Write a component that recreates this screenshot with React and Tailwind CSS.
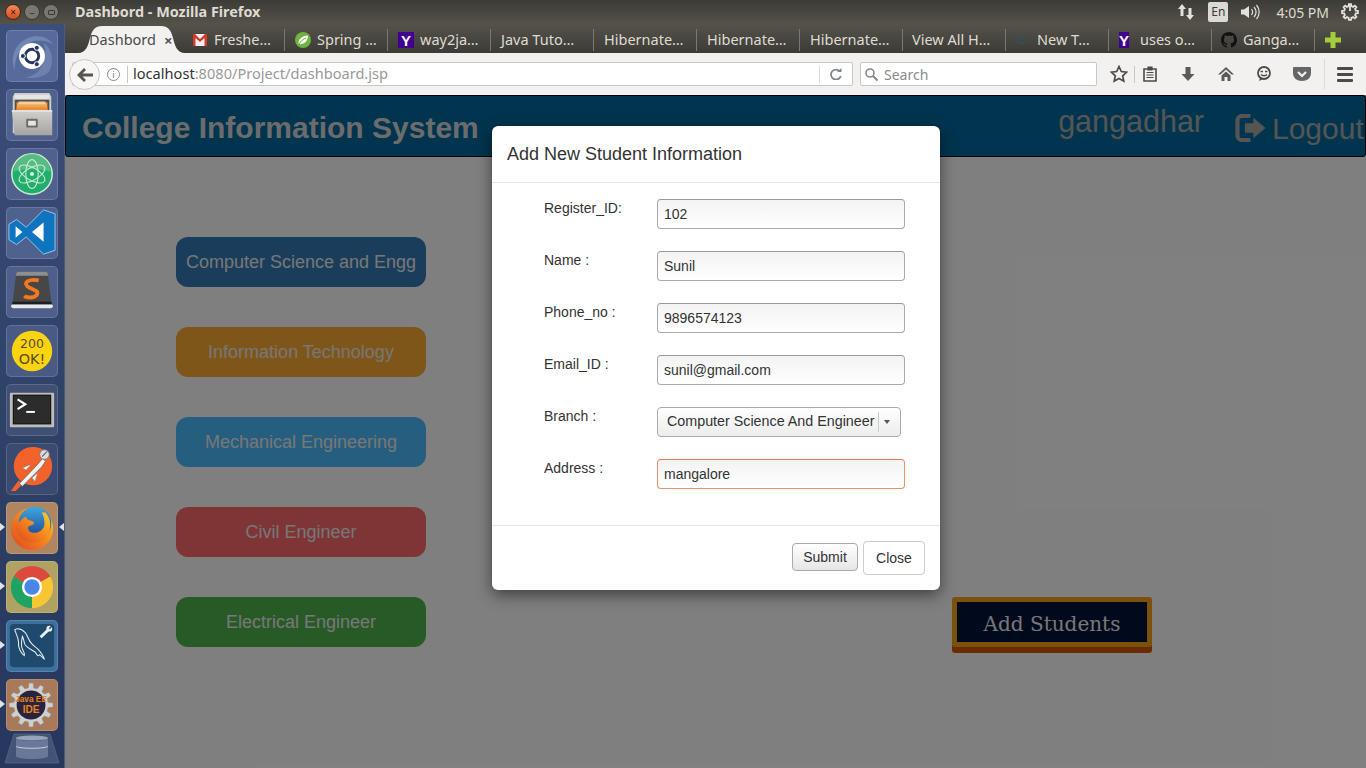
import React from "react";

const gearPoints = (cx, cy, ro, ri, n) => {
  const pts = [];
  for (let i = 0; i < n; i++) {
    const a = (i / n) * Math.PI * 2;
    const s = Math.PI / n;
    [[ri, a - s * 0.62], [ro, a - s * 0.36], [ro, a + s * 0.36], [ri, a + s * 0.62]].forEach(([r, t]) =>
      pts.push(`${(cx + r * Math.cos(t)).toFixed(1)},${(cy + r * Math.sin(t)).toFixed(1)}`)
    );
  }
  return pts.join(" ");
};

const Ico = ({ children, size = 52, box = 52, className = "" }) => (
  <svg width={size} height={size} viewBox={`0 0 ${box} ${box}`} className={className}>{children}</svg>
);

const UbuntuIcon = () => (
  <Ico>
    <path d="M8 40C2 26 10 10 26 6c10-2 18 2 22 8-8-5-20-6-28 0C12 20 8 30 8 40z" fill="#8b9cc6" opacity=".55" />
    <path d="M44 42c6-12 2-24-6-30 4 10 2 24-8 32-4 3-8 4-12 4 10 2 20 0 26-6z" fill="#8b9cc6" opacity=".45" />
    <circle cx="26" cy="26" r="13.500" fill="#fff" />
    <circle cx="26" cy="26" r="7" fill="none" stroke="#27365f" strokeWidth="3" />
    <circle cx="31" cy="17.500" r="2.600" fill="#27365f" stroke="#fff" />
    <circle cx="31" cy="34.500" r="2.600" fill="#27365f" stroke="#fff" />
    <circle cx="16.500" cy="26" r="2.600" fill="#27365f" stroke="#fff" />
  </Ico>
);
const FilesIcon = () => (
  <Ico>
    <defs>
      <linearGradient id="fg" x1="0" y1="0" x2="0" y2="1">
        <stop offset="0" stopColor="#d2d0cc" />
        <stop offset="1" stopColor="#a6a4a0" />
      </linearGradient>
    </defs>
    <path d="M8 3h36l2 4v38H6V7z" fill="#cfcecb" />
    <rect x="8" y="5" width="36" height="5" fill="#e6e5e3" />
    <rect x="8" y="10" width="36" height="11" fill="#55534f" />
    <rect x="10" y="13" width="32" height="8" fill="#f0a454" />
    <rect x="12" y="12" width="28" height="3" fill="#f7cf9b" />
    <rect x="10" y="18" width="32" height="3" fill="#e98f3a" />
    <path d="M5 21h42v26H8z" fill="url(#fg)" />
    <path d="M5 21h42v1.500H5z" fill="#e8e7e4" />
    <rect x="20" y="30" width="12" height="9" rx="1" fill="#6d6b68" />
    <rect x="22" y="32" width="8" height="5" fill="#e7e6e4" />
  </Ico>
);
const AtomIcon = () => (
  <Ico>
    <circle cx="26" cy="26" r="21" fill="#1fae6d" stroke="#cfe9d5" strokeWidth="1.600" />
    <path d="M7 24A19 19 0 0 1 45 24C40 20 12 20 7 24z" fill="#6cc28d" opacity=".7" />
    <g fill="none" stroke="#c3e8cf" strokeWidth="1.200">
      <ellipse cx="26" cy="26" rx="15" ry="6.500" transform="rotate(30 26 26)" />
      <ellipse cx="26" cy="26" rx="15" ry="6.500" transform="rotate(-30 26 26)" />
      <ellipse cx="26" cy="26" rx="15" ry="6.500" transform="rotate(90 26 26)" />
    </g>
    <circle cx="26" cy="26" r="2.200" fill="#d4efdc" />
  </Ico>
);
const VSCodeIcon = () => (
  <Ico>
    <path d="M38 2l12 4v38l-12 4-18-18-10 8-8-5V17l8-5 10 8z" fill="#0e74c0" stroke="#9cc6e8" strokeWidth="1" />
    <path d="M38 15v20L26 25z" fill="#fff" />
    <path d="M9 19l7 6-7 6z" fill="#fff" />
  </Ico>
);
const SublimeIcon = () => (
  <Ico>
    <path d="M12 5h28q2 0 2.500 2L46 36H6L9.500 7q.5-2 2.500-2z" fill="#474747" />
    <path d="M12 5h28q2 0 2.500 2l.3 2H9.200l.3-2q.5-2 2.500-2z" fill="#8e8e8e" />
    <path d="M6 36h40l1 3H5z" fill="#1e1e1e" />
    <path d="M5 39h42l1 2-2 2H6l-2-2z" fill="#e8e8e8" />
    <path d="M33 14C23 12 17 16 21 20 26 24 34 24 31 29 28 33 20 32 18 30" fill="none" stroke="#f5781f" strokeWidth="4" />
  </Ico>
);
const OkIcon = () => (
  <Ico>
    <circle cx="26" cy="26" r="21" fill="#fbd411" />
    <text x="26" y="23" textAnchor="middle" fontSize="13" fontFamily="'DejaVu Sans',sans-serif" fill="#5a4c10">200</text>
    <text x="26" y="39" textAnchor="middle" fontSize="15" fontFamily="'DejaVu Sans',sans-serif" fill="#5a4c10">OK!</text>
  </Ico>
);
const TermIcon = () => (
  <Ico>
    <rect x="3" y="8" width="46" height="36" rx="1" fill="#bdbdbb" />
    <rect x="6" y="10" width="40" height="31" fill="#111" />
    <rect x="7" y="11" width="38" height="29" fill="#2c2c2c" />
    <path d="M11 15l8 5-8 5" fill="none" stroke="#fff" strokeWidth="2.200" />
    <rect x="20" y="27" width="9" height="2" fill="#fff" />
  </Ico>
);
const PostmanIcon = () => (
  <Ico>
    <circle cx="27" cy="23" r="20" fill="#f4622b" />
    <path d="M4 49L12 38l5 3-8 8z" fill="#f4622b" />
    <path d="M13 41l19-20 5-6 3 3-4 6-20 20z" fill="#f2f2f2" stroke="#666" strokeWidth=".8" />
    <circle cx="39" cy="11" r="5" fill="#ddd" stroke="#777" />
    <path d="M36.500 13l5-5" stroke="#666" strokeWidth="1.200" />
    <path d="M25 21l-9 4 4 2zM32 30l-3 9-3-4z" fill="#fff" stroke="#777" strokeWidth=".5" />
  </Ico>
);
const FirefoxIcon = () => (
  <Ico>
    <defs>
      <linearGradient id="ff1" x1="1" y1="0" x2="0" y2="1">
        <stop offset="0" stopColor="#f9d22a" />
        <stop offset=".45" stopColor="#f58a1f" />
        <stop offset="1" stopColor="#dd4420" />
      </linearGradient>
      <linearGradient id="ff2" x1="0" y1="0" x2="0" y2="1">
        <stop offset="0" stopColor="#3fa7e0" />
        <stop offset="1" stopColor="#1b3f8f" />
      </linearGradient>
    </defs>
    <circle cx="26" cy="27" r="22" fill="url(#ff1)" />
    <circle cx="29" cy="21" r="17" fill="url(#ff2)" />
    <path d="M40 10c6 6 7 18 1 25-7 8-20 8-27 1C8 30 7 20 11 14c0 3 1 5 2 6 2-3 4-5 7-6 0 2 1 3 3 4 3 1 5 1 5 3 0 2-5 2-6 4-1 3 2 6 6 6 6 0 11-4 11-10 0-4-1-8-3-11 1 0 2 0 4 0z" fill="url(#ff1)" />
  </Ico>
);
const ChromeIcon = () => (
  <Ico>
    <path d="M26 26L7 15A22 22 0 0 1 45 15z" fill="#dc4a3d" />
    <path d="M26 26L45 15A22 22 0 0 1 26 48z" fill="#f7c633" />
    <path d="M26 26L26 48A22 22 0 0 1 7 15z" fill="#1fa362" />
    <circle cx="26" cy="26" r="10.500" fill="#fff" />
    <circle cx="26" cy="26" r="8" fill="#4a86e8" />
  </Ico>
);
const MysqlIcon = () => (
  <Ico>
    <rect x="3" y="3" width="46" height="45" rx="4" fill="#1f4a6e" />
    <path d="M8 9c4-2 8 0 11 3 3 4 3 9 8 13 4 3 9 6 12 15l-5-5c-3 3-2 0-5-3-3-2-7-3-10-7-2-3-1-6-3-9-1 5-2 9 0 13 1 3 3 5 2 7-3-2-7-8-6-14 0-4-2-7-4-13z" fill="none" stroke="#e3edf4" strokeWidth="1.100" />
    <path d="M35 17l8-8" stroke="#e8f0f6" strokeWidth="3" />
    <circle cx="44" cy="8" r="3" fill="#e8f0f6" />
    <path d="M44 8l3-3" stroke="#1f4a6e" strokeWidth="1.500" />
  </Ico>
);
const JavaIcon = () => (
  <Ico>
    <polygon points={gearPoints(25, 26, 23, 18, 12)} fill="#cfcfcf" stroke="#888" strokeWidth=".6" />
    <circle cx="25" cy="26" r="15" fill="#2a2340" />
    <text x="25" y="23" textAnchor="middle" fontSize="10" fontWeight="700" textLength="33" lengthAdjust="spacingAndGlyphs" fontFamily="'Liberation Sans',sans-serif" fill="#e8841a">Java EE</text>
    <text x="25" y="34" textAnchor="middle" fontSize="10.500" fontWeight="700" fontFamily="'Liberation Sans',sans-serif" fill="#e8841a">IDE</text>
  </Ico>
);
const TrashIcon = () => (
  <svg width="56" height="32" viewBox="0 0 56 32" className="-mt-[5px]">
    <path d="M10 1h36l9 29H1z" fill="#6d7da0" opacity=".4" stroke="#a9b4cb" strokeWidth=".7" />
    <ellipse cx="28" cy="5" rx="16" ry="2.500" fill="#aeb7c9" opacity=".8" />
    <path d="M12 5v18c0 4 32 4 32 0V5c0 4-32 4-32 0z" fill="#8b97b2" opacity=".55" />
    <path d="M12 13c0 3 32 3 32 0" fill="none" stroke="#c8cfdc" strokeWidth="1" />
  </svg>
);

const launcher = [
  { I: UbuntuIcon, tile: "bg-[#566a9c]" },
  { I: FilesIcon, tile: "bg-[#4f628e]" },
  { I: AtomIcon, tile: "bg-[#4f628e]" },
  { I: VSCodeIcon, tile: "bg-[#4f628e]" },
  { I: SublimeIcon, tile: "bg-[#4d5f8a]" },
  { I: OkIcon, tile: "bg-[#495b83]" },
  { I: TermIcon, tile: "bg-[#3f4f76]" },
  { I: PostmanIcon, tile: "bg-[#3a4a70]" },
  { I: FirefoxIcon, tile: "bg-[#b08562]", left: true, right: true },
  { I: ChromeIcon, tile: "bg-[#b0a263]", left: true },
  { I: MysqlIcon, tile: "bg-[#3e709f]", left: true },
  { I: JavaIcon, tile: "bg-[#a87a5a]", left: true },
];

const Launcher = () => (
  <aside className="w-[65px] shrink-0 h-[744px] bg-gradient-to-b from-[#3b4f7b] via-[#2f4268] to-[#27365d] border-r border-[#4a5a80] flex flex-col items-center pt-[6px] gap-[7px] overflow-hidden">
    {launcher.map(({ I, tile, left, right }, i) => (
      <div key={i} className="relative w-full flex justify-center">
        <div className={`w-[52px] h-[52px] rounded-[5px] border border-white/15 flex items-center justify-center ${tile}`}>
          <I />
        </div>
        {left && <span className="absolute left-0 top-[21px] w-0 h-0 border-y-[4px] border-y-transparent border-l-[5px] border-l-[#dfe3ea]" />}
        {right && <span className="absolute right-0 top-[21px] w-0 h-0 border-y-[4px] border-y-transparent border-r-[5px] border-r-[#dfe3ea]" />}
      </div>
    ))}
    <TrashIcon />
  </aside>
);

const Gmail = () => (
  <Ico size={16} box={16}>
    <rect x="1" y="2" width="14" height="12" fill="#f2f2f2" />
    <path d="M1 2v12h2.500V6L8 10l4.500-4v8H15V2h-2L8 7 3 2z" fill="#d9392c" />
  </Ico>
);
const Spring = () => (
  <Ico size={16} box={16}>
    <circle cx="8" cy="8" r="8" fill="#6db33f" />
    <path d="M3.500 12C3 7 7 4 13 3.500 13 9 9 13 3.500 12z" fill="#fff" />
    <path d="M4 12c2-3 4-5 7-6" stroke="#6db33f" strokeWidth="1" fill="none" />
  </Ico>
);
const Yahoo = ({ size = 16 }) => (
  <span className="flex items-center justify-center bg-[#400090] text-white font-bold text-[15px] leading-none font-['Liberation_Sans',sans-serif]" style={{ width: size, height: 16 }}>Y</span>
);
const Ring = () => (
  <Ico size={10} box={10}>
    <circle cx="5" cy="5" r="3.600" fill="none" stroke="#33506b" strokeWidth="1.200" />
  </Ico>
);
const Github = () => (
  <Ico size={16} box={16}>
    <path fill="#111" d="M8 0C3.600 0 0 3.600 0 8c0 3.500 2.300 6.500 5.500 7.600.4.1.5-.2.5-.4v-1.400c-2.200.5-2.700-1-2.700-1-.4-.9-.9-1.200-.9-1.200-.7-.5.1-.5.1-.5.8.1 1.200.8 1.200.8.7 1.200 1.900.9 2.300.7.1-.5.3-.9.5-1.100-1.800-.2-3.600-.9-3.600-4 0-.9.3-1.600.8-2.100-.1-.2-.4-1 .1-2.100 0 0 .7-.2 2.200.8.6-.2 1.300-.3 2-.3s1.400.1 2 .3c1.500-1 2.200-.8 2.200-.8.4 1.100.2 1.900.1 2.100.5.6.8 1.300.8 2.100 0 3.100-1.900 3.700-3.700 3.900.3.3.6.8.6 1.500v2.200c0 .2.1.5.6.4C13.700 14.500 16 11.500 16 8c0-4.400-3.600-8-8-8z" />
  </Ico>
);

const tabs = [
  { t: "Freshe…", icon: <Gmail />, w: "w-[100px]", pl: "pl-[7px]" },
  { t: "Spring …", icon: <Spring />, w: "w-[103px]", pl: "pl-[10px]" },
  { t: "way2ja…", icon: <Yahoo />, w: "w-[103px]", pl: "pl-[10px]" },
  { t: "Java Tuto…", w: "w-[103px]", pl: "pl-[10px]" },
  { t: "Hibernate…", w: "w-[103px]", pl: "pl-[10px]" },
  { t: "Hibernate…", w: "w-[103px]", pl: "pl-[10px]" },
  { t: "Hibernate…", w: "w-[103px]", pl: "pl-[10px]" },
  { t: "View All H…", w: "w-[103px]", pl: "pl-[9px]" },
  { t: "New T…", icon: <span className="w-[20px] flex justify-center"><Ring /></span>, w: "w-[103px]", pl: "pl-[5px]" },
  { t: "uses o…", icon: <span className="mr-[5px]"><Yahoo size={10} /></span>, w: "w-[103px]", pl: "pl-[10px]" },
  { t: "Ganga…", icon: <Github />, w: "w-[103px]", pl: "pl-[9px]" },
];

const ui = "font-['Noto_Sans','Open_Sans',sans-serif]";

const TitleBar = () => (
  <div className={`h-6 bg-gradient-to-b from-[#3d3b36] to-[#55524a] flex items-center text-[#dfdbd2] ${ui}`}>
    <div className="w-[65px] shrink-0 flex items-center gap-[3px] pl-[5px]">
      <span className="w-4 h-4 rounded-full bg-gradient-to-b from-[#f08a5a] to-[#d9491a] border border-[#3a2a22] flex items-center justify-center text-[10px] leading-none text-[#3a1a10]">×</span>
      <span className="w-4 h-4 rounded-full bg-[#7a776e] border border-[#3a3833] flex items-center justify-center text-[10px] leading-none text-[#3a3833]">–</span>
      <span className="w-4 h-4 rounded-full bg-[#7a776e] border border-[#3a3833] flex items-center justify-center"><span className="w-[7px] h-[5px] border border-[#3a3833] rounded-[1px]" /></span>
    </div>
    <span className="ml-[10px] text-[14.400px] font-bold">Dashbord - Mozilla Firefox</span>
    <div className="ml-auto flex items-center">
      <svg width="20" height="18" viewBox="0 0 20 18" className="mr-[12px]">
        <path d="M6 1l4 5H7.500v7h-3V6H2zM14 17l4-5h-2.500V5h-3v7H10z" fill="#e4e1da" />
      </svg>
      <span className="w-[20px] h-[20px] rounded-[2px] bg-[#dcdad5] text-[#3c3b37] text-[12px] flex items-center justify-center">En</span>
      <svg width="20" height="18" viewBox="0 0 20 18" className="ml-[12px]">
        <path d="M1 6.500h3L9 3v12L4 11.500H1z" fill="#e4e1da" />
        <path d="M11.500 6c1.500 2 1.500 4 0 6M14 4c2.500 3 2.500 7 0 10M16.500 2c3.500 4 3.500 10 0 14" fill="none" stroke="#e4e1da" strokeWidth="1.200" />
      </svg>
      <span className="ml-[16px] text-[14px]">4:05 PM</span>
      <svg width="18" height="18" viewBox="0 0 18 18" className="ml-[12px] mr-[7px]">
        <polygon points={gearPoints(9, 9, 8, 6, 8)} fill="none" stroke="#e4e1da" strokeWidth="1.800" />
        <path d="M9 1v7" stroke="#e4e1da" strokeWidth="1.800" />
      </svg>
    </div>
  </div>
);

const TabBar = () => (
  <div className={`h-[29px] bg-gradient-to-b from-[#55524a] to-[#3c3b37] flex items-end pl-[13px] text-[#dfdbd2] text-[14.500px] ${ui}`}>
    <div className="relative w-[107px] h-[27px] shrink-0 flex items-center pt-[1px] text-[#4a4a4a]">
      <svg width="107" height="27" viewBox="0 0 107 27" className="absolute inset-0">
        <path d="M0 27C8 27 10 20 12 12 14 4 17 0 24 0H83C90 0 93 4 95 12 97 20 99 27 107 27Z" fill="#f2f1ef" />
      </svg>
      <span className="relative ml-[11px]">Dashbord</span>
      <span className="relative ml-[8px] text-[15px] font-bold text-[#555]">×</span>
    </div>
    {tabs.map((tab, i) => (
      <div key={i} className={`h-[22px] mb-[2px] flex items-center gap-[6px] border-r border-[#7a7871] shrink-0 whitespace-nowrap overflow-hidden ${tab.w} ${tab.pl}`}>
        {tab.icon}
        <span>{tab.t}</span>
      </div>
    ))}
    <svg width="16" height="16" viewBox="0 0 16 16" className="ml-[10px] mb-[5px]">
      <path d="M5.500 0h5v5.500H16v5h-5.500V16h-5v-5.500H0v-5h5.500z" fill="#a5cc3a" />
    </svg>
  </div>
);

const tb = "#4a4a4a";
const NavBar = () => (
  <div className={`h-[42px] bg-[#f2f1ef] flex items-center pl-[5px] text-[14px] ${ui}`}>
    <div className="relative flex items-center w-[781px] h-6 bg-white border border-[#c9c7c4] rounded-[2px] ml-[2px]">
      <span className="absolute -left-[4px] -top-[4px] w-[31px] h-[31px] rounded-full bg-[#f7f6f5] border border-[#c9c7c4] flex items-center justify-center">
        <svg width="16" height="14" viewBox="0 0 16 14"><path d="M7 0l2 2-3.500 3.500H16v3H5.500L9 12l-2 2-7-7z" fill="#555" /></svg>
      </span>
      <span className="ml-[34px] w-[13px] h-[13px] rounded-full border border-[#888] flex items-center justify-center text-[9px] leading-none text-[#777]">i</span>
      <span className="ml-[7px] h-[17px] border-l border-[#c9c7c4]" />
      <span className="ml-[5px] text-[14.600px]"><span className="text-[#333]">localhost</span><span className="text-[#999]">:8080/Project/dashboard.jsp</span></span>
      <span className="ml-auto h-[17px] border-l border-[#dcdad8]" />
      <svg width="12" height="12" viewBox="0 0 12 12" className="mx-[10px]">
        <path d="M10 3.500A5 5 0 1 0 10.800 8" fill="none" stroke="#7c8590" strokeWidth="1.800" />
        <path d="M7 4h4.500V0z" fill="#7c8590" />
      </svg>
    </div>
    <div className="ml-[7px] w-[237px] h-6 bg-white border border-[#c9c7c4] rounded-[2px] flex items-center pl-[3px] text-[#8a8a8a]">
      <svg width="15" height="15" viewBox="0 0 15 15"><circle cx="6" cy="6" r="4" fill="none" stroke="#888" strokeWidth="1.600" /><path d="M9 9l4.500 4.500" stroke="#888" strokeWidth="2" /></svg>
      <span className="ml-[5px]">Search</span>
    </div>
    <svg width="18" height="18" viewBox="0 0 18 18" className="ml-[13px]">
      <path d="M9 1.500l2.300 5 5.400.6-4 3.700 1.100 5.400L9 13.500l-4.800 2.700 1.100-5.400-4-3.700 5.400-.6z" fill="none" stroke={tb} strokeWidth="1.700" />
    </svg>
    <span className="ml-[6px] h-[17px] border-l border-[#c9c7c4]" />
    <svg width="16" height="16" viewBox="0 0 16 16" className="ml-[7px]">
      <path d="M2 3h12v12H2z" fill="none" stroke={tb} strokeWidth="1.600" />
      <path d="M6 1h4v3H6zM4.500 6.500h7M4.500 9h7M4.500 11.500h7" fill={tb} stroke={tb} strokeWidth="1.200" />
    </svg>
    <svg width="16" height="16" viewBox="0 0 16 16" className="ml-[22px]">
      <path d="M5.500 1h5v7H14.500L8 15 1.500 8H5.500z" fill="#5a5a5a" />
    </svg>
    <svg width="16" height="16" viewBox="0 0 16 16" className="ml-[22px]">
      <path d="M8 1L0 8.500h2.500L8 3.500l5.500 5H16zM3.500 9.500L8 5.500l4.500 4V15H9.500v-4h-3v4H3.500z" fill="#5a5a5a" />
    </svg>
    <svg width="16" height="16" viewBox="0 0 16 16" className="ml-[22px]">
      <circle cx="8" cy="7" r="6" fill="none" stroke={tb} strokeWidth="1.800" />
      <path d="M4.500 5.500h2.500M9 5.500h2.500M5 8.500c1.500 1.500 4.500 1.500 6 0" fill="none" stroke={tb} strokeWidth="1.500" />
      <path d="M4 12l-1 3 4-2z" fill={tb} />
    </svg>
    <svg width="18" height="16" viewBox="0 0 18 16" className="ml-[21px]">
      <path d="M1 1h16a1 1 0 0 1 1 1v5c0 5-4 8-9 8S0 12 0 7V2a1 1 0 0 1 1-1z" fill="#666" />
      <path d="M5 6l4 4 4-4" fill="none" stroke="#f2f1ef" strokeWidth="2.200" />
    </svg>
    <span className="ml-[13px] h-[30px] border-l border-[#dcdad8]" />
    <span className="ml-[12px] w-[16px] flex flex-col gap-[3px]">
      <i className="h-[3px] bg-[#4a4a4a] rounded-[1px]" />
      <i className="h-[3px] bg-[#4a4a4a] rounded-[1px]" />
      <i className="h-[3px] bg-[#4a4a4a] rounded-[1px]" />
    </span>
  </div>
);

const depts = [
  { t: "Computer Science and Engg", c: "bg-[#337ab7]" },
  { t: "Information Technology", c: "bg-[#feac34]" },
  { t: "Mechanical Engineering", c: "bg-[#4cbcff]" },
  { t: "Civil Engineer", c: "bg-[#ff6a6a]" },
  { t: "Electrical Engineer", c: "bg-[#50b450]" },
];

const Backdrop = () => (
  <div className="bg-white h-full font-['Liberation_Sans',sans-serif]">
    <header className="h-[62px] bg-[#026a9e] border border-black rounded-[3px] flex overflow-hidden whitespace-nowrap">
      <h1 className="ml-[16px] mt-[12px] text-[30px] leading-[40px] font-bold text-[#d8d8d8]">College Information System</h1>
      <span className="ml-auto mt-[5px] text-[30.500px] leading-[40px] text-[#aaa]">gangadhar</span>
      <svg width="32" height="28" viewBox="0 0 33 30" className="ml-[31px] mt-[18px] shrink-0">
        <path d="M14 2H7a5 5 0 0 0-5 5v16a5 5 0 0 0 5 5h7" fill="none" stroke="#aaa" strokeWidth="4.500" strokeLinecap="round" />
        <path d="M19 4l13 11-13 11v-6H10v-10h9z" fill="#aaa" />
      </svg>
      <span className="ml-[5px] mt-[13px] text-[30px] leading-[40px] text-[#aaa] w-[93px] shrink-0">Logout</span>
    </header>
    <div className="flex items-start pl-[111px] pt-[80px]">
      <div className="w-[250px] flex flex-col gap-[40px]">
        {depts.map((d) => (
          <div key={d.t} className={`h-[50px] rounded-[12px] flex items-center justify-center text-[18px] text-[#eee] whitespace-nowrap ${d.c}`}>{d.t}</div>
        ))}
      </div>
      <div className="ml-[526px] mt-[360px] w-[200px] h-[50px] pt-[3px] bg-[#001438] border-[5px] border-[#f4a412] rounded-[3px] shadow-[0_6px_0_#d65a00] flex items-center justify-center text-[20px] text-[#eee] font-['DejaVu_Serif',serif]">Add Students</div>
    </div>
  </div>
);

const rows = [
  { l: "Register_ID:", v: "102" },
  { l: "Name :", v: "Sunil" },
  { l: "Phone_no :", v: "9896574123" },
  { l: "Email_ID :", v: "sunil@gmail.com" },
];

const inputCls = "w-[248px] h-[30px] rounded-[4px] bg-gradient-to-b from-[#f3f3f3] to-white flex items-center pl-[6px] text-[14px] text-[#333] border";

const Row = ({ label, children }) => (
  <div className="flex h-[30px]">
    <label className="w-[113px] text-[14px] leading-[18px] text-[#333]">{label}</label>
    {children}
  </div>
);

const Modal = () => (
  <div className="absolute left-[427px] top-[31px] w-[448px] h-[464px] bg-white rounded-[6px] shadow-[0_5px_15px_rgba(0,0,0,0.5)] flex flex-col font-['Liberation_Sans',sans-serif]">
    <div className="h-[57px] border-b border-[#e5e5e5] pl-[15px] flex items-center text-[18px] text-[#333]">Add New Student Information</div>
    <div className="flex-1 pl-[52px] pt-[16px] flex flex-col gap-[22px]">
      {rows.map((r) => (
        <Row key={r.l} label={r.l}>
          <div className={`${inputCls} border-[#aaa] border-t-[#999]`}>{r.v}</div>
        </Row>
      ))}
      <Row label="Branch :">
        <div className="w-[244px] h-[30px] rounded-[4px] border border-[#aaa] bg-gradient-to-b from-white to-[#ececec] flex items-center pl-[9px] text-[14.300px] text-[#333] whitespace-nowrap">
          <span className="w-[211px] overflow-hidden">Computer Science And Engineer</span>
          <span className="h-[20px] border-l border-[#ccc]" />
          <span className="ml-[5px] w-0 h-0 border-x-[3px] border-x-transparent border-t-[4px] border-t-[#555]" />
        </div>
      </Row>
      <Row label="Address :">
        <div className={`${inputCls} border-[#ea8f70] border-t-[#e27a58]`}>mangalore</div>
      </Row>
    </div>
    <div className="h-[65px] border-t border-[#e5e5e5] flex items-center justify-end pr-[15px] gap-[5px] text-[14px] text-[#333]">
      <button className="w-[66px] h-[28px] rounded-[4px] border border-[#aaa] bg-gradient-to-b from-white to-[#e6e6e6] -mt-[2px]">Submit</button>
      <button className="w-[62px] h-[34px] rounded-[4px] border border-[#ccc] bg-white">Close</button>
    </div>
  </div>
);

export default function App() {
  return (
    <div className="w-[1366px] h-[768px] overflow-hidden bg-[#3c3b37]">
      <TitleBar />
      <div className="flex">
        <Launcher />
        <div className="flex-1 min-w-0 flex flex-col h-[744px]">
          <TabBar />
          <NavBar />
          <main className="relative flex-1 min-h-0 overflow-hidden">
            <Backdrop />
            <div className="absolute inset-0 bg-black/50" />
            <Modal />
          </main>
        </div>
      </div>
    </div>
  );
}
